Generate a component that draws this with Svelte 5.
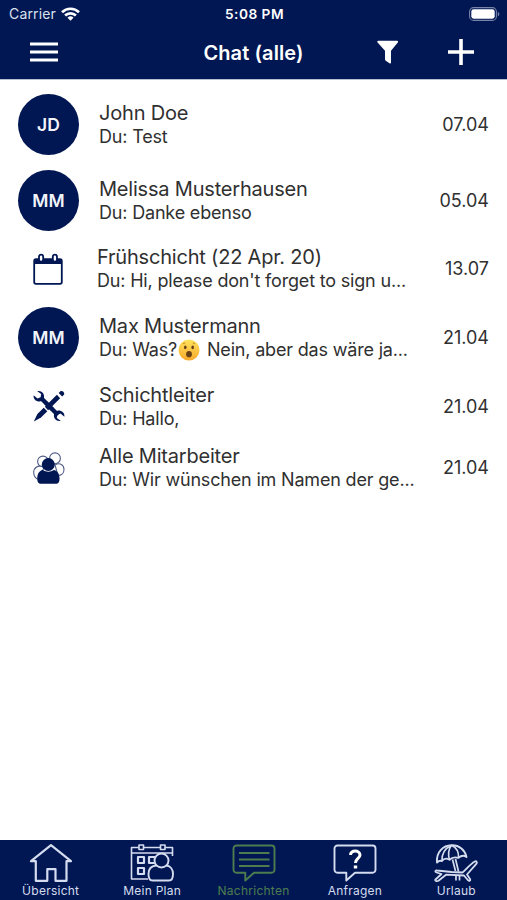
<script lang="ts">
  type Chat = {
    kind: 'person' | 'shift' | 'tools' | 'group';
    initials?: string;
    name: string;
    before: string;
    emoji?: boolean;
    after?: string;
    date: string;
  };

  const chats: Chat[] = [
    { kind: 'person', initials: 'JD', name: 'John Doe', before: 'Du: Test', date: '07.04' },
    { kind: 'person', initials: 'MM', name: 'Melissa Musterhausen', before: 'Du: Danke ebenso', date: '05.04' },
    { kind: 'shift', name: 'Frühschicht (22 Apr. 20)', before: "Du: Hi, please don't forget to sign u...", date: '13.07' },
    { kind: 'person', initials: 'MM', name: 'Max Mustermann', before: 'Du: Was?', emoji: true, after: ' Nein, aber das wäre ja...', date: '21.04' },
    { kind: 'tools', name: 'Schichtleiter', before: 'Du: Hallo,', date: '21.04' },
    { kind: 'group', name: 'Alle Mitarbeiter', before: 'Du: Wir wünschen im Namen der ge...', date: '21.04' },
  ];

  const tabs = [
    { id: 'home', label: 'Übersicht' },
    { id: 'plan', label: 'Mein Plan' },
    { id: 'messages', label: 'Nachrichten' },
    { id: 'requests', label: 'Anfragen' },
    { id: 'vacation', label: 'Urlaub' },
  ];

  let active = $state('messages');
</script>

<div class="app">
  <header>
    <!-- Status bar -->
    <div class="status">
      <div class="carrier">
        <span>Carrier</span>
        <svg width="19" height="14" viewBox="0 0 19 14" aria-hidden="true">
          <g fill="none" stroke="#fff" stroke-width="2.7">
            <path d="M1 5.2a12.2 12.2 0 0 1 17 0" />
            <path d="M4.1 8.5a7.7 7.7 0 0 1 10.8 0" />
          </g>
          <path d="M6.5 10.8a4.3 4.3 0 0 1 6 0l-3 3z" fill="#fff" />
        </svg>
      </div>
      <span class="time">5:08 PM</span>
      <svg class="battery" width="31" height="14" viewBox="0 0 31 14" aria-hidden="true">
        <rect x=".6" y=".6" width="26.8" height="12.8" rx="4" fill="none" stroke="#7783a7" stroke-width="1.1" />
        <rect x="2.3" y="2.3" width="23.4" height="9.4" rx="2.4" fill="#fff" />
        <path d="M28.8 4.7c2 .8 2 3.8 0 4.6z" fill="#7783a7" />
      </svg>
    </div>

    <!-- Title bar -->
    <div class="toolbar">
      <button class="menu" aria-label="Menü">
        <svg width="28" height="20" viewBox="0 0 28 20"><path d="M0 2h28M0 10h28M0 18h28" stroke="#fff" stroke-width="3" /></svg>
      </button>
      <h1>Chat (alle)</h1>
      <div class="actions">
        <button aria-label="Filter">
          <svg width="22" height="24" viewBox="0 0 22 24"><path d="M1.3.8h18.8c1 0 1.3 1 .7 1.8L14 10.8v12c0 .8-.8 1-1.5.5l-3.8-2.6c-.5-.4-.7-.8-.7-1.4v-8.5L.6 2.6C0 1.8.3.8 1.3.8z" fill="#fff" /></svg>
        </button>
        <button aria-label="Neuer Chat">
          <svg width="26" height="26" viewBox="0 0 26 26"><path d="M0 13h26M13 0v26" stroke="#fff" stroke-width="3.6" /></svg>
        </button>
      </div>
    </div>
  </header>

  <!-- Chat list -->
  <main>
    {#each chats as chat}
      <div class="row" class:row--person={chat.kind === 'person'} class:row--shift={chat.kind === 'shift'}>
        <div class="avatar">
          {#if chat.kind === 'person'}
            <span class="circle">{chat.initials}</span>
          {:else if chat.kind === 'shift'}
            <svg width="30" height="32" viewBox="0 0 30 32">
              <rect x="1.2" y="6.2" width="27.6" height="24.6" rx="1.8" fill="#fff" stroke="#001753" stroke-width="1.8" />
              <path d="M1 6.5h28v4.500H1z" fill="#001753" />
              <rect x="6" y="1.6" width="4.2" height="7" rx="2.1" fill="#fff" stroke="#001753" stroke-width="1.8" />
              <rect x="19.8" y="1.6" width="4.2" height="7" rx="2.1" fill="#fff" stroke="#001753" stroke-width="1.8" />
            </svg>
          {:else if chat.kind === 'tools'}
            <svg width="32" height="32" viewBox="0 0 32 32">
              <path d="M8 8l17 17" stroke="#001753" stroke-width="4.4" />
              <path d="M4.3 1.2C8.2.2 12 3.6 10.9 8c-.7 2.7-3.7 4.2-6.4 3.3C1.8 10.4.2 8 .6 5.2l3.900 3.200 3.100-1.200.6-3.200zM27.700 30.800c-3.900 1-7.700-2.400-6.600-6.800.7-2.700 3.700-4.200 6.400-3.300 2.700.9 4.300 3.300 3.900 6.100l-3.900-3.200-3.100 1.200-.6 3.200z" fill="#001753" />
              <path d="M9 23L26 6" stroke="#fff" stroke-width="5.8" />
              <path d="M13.500 18.500L25.500 6.500" stroke="#001753" stroke-width="4.6" />
              <path d="M10.700 17.700l3.600 3.600-6.300 6.300L.8 31.400l3.600-7.400z" fill="#001753" />
              <path d="M13 13l6 6" stroke="#001753" stroke-width="4.4" />
              <path d="M25.700 3l1.700-1.700c1.800-1.400 4.900 1.500 3.500 3.500L29.200 6.500z" fill="#001753" />
            </svg>
          {:else}
            <svg width="32" height="32" viewBox="0 0 32 32">
              <g fill="#fff" stroke="#4f5c86" stroke-width="1.1">
                <circle cx="22" cy="6.300" r="5.400" />
                <path d="M22 13c5-3 9 0 9 4.500 0 3.500-2.500 6-6 6z" />
                <circle cx="10" cy="9.500" r="5.400" />
                <path d="M11 15.500C5 12 .7 16 .7 20.500c0 3.500 2 6 5 7z" />
              </g>
              <circle cx="15.300" cy="12.500" r="6.500" fill="#001753" />
              <path d="M9.800 18c3.300 2.200 7.700 2.200 11 0 3.500.6 5.700 3.600 5.700 8.500 0 3.700-1 5.300-3.700 5.300H8.200c-2.800 0-3.900-1.600-3.900-5.300 0-4.900 2-7.900 5.500-8.500z" fill="#001753" />
            </svg>
          {/if}
        </div>
        <div class="text">
          <div class="name">{chat.name}</div>
          <div class="preview">{chat.before}{#if chat.emoji}<svg class="emoji" viewBox="0 0 22 22" role="img" aria-label="Erstauntes Gesicht">
            <defs><linearGradient id="face" x2="0" y2="1"><stop stop-color="#ffe35c" /><stop offset="1" stop-color="#f7a92b" /></linearGradient></defs>
            <circle cx="11" cy="11" r="10.5" fill="url(#face)" />
            <ellipse cx="7.3" cy="8.3" rx="1.3" ry="1.9" fill="#684016" />
            <ellipse cx="14.7" cy="8.3" rx="1.3" ry="1.9" fill="#684016" />
            <ellipse cx="11" cy="15.2" rx="2.9" ry="3.1" fill="#684016" />
            <path d="M5 4.800l2.200-1M14.800 3.800l2.200 1" stroke="#b8741b" stroke-width=".8" />
          </svg>{/if}{chat.after ?? ''}</div>
        </div>
        <time>{chat.date}</time>
      </div>
    {/each}
  </main>

  <!-- Bottom navigation -->
  <nav>
    {#each tabs as tab}
      <button class="tab" class:tab--active={tab.id === active} onclick={() => (active = tab.id)}>
        <svg width="44" height="38" viewBox="0 0 44 38" fill="none" stroke="currentColor" stroke-width="1.9" stroke-linejoin="round">
          {#if tab.id === 'home'}
            <path d="M22 1.200L2 17.200h4.800v19.600h11.500V25.200h8.200v11.600h11V17.200H42z" stroke-width="2.2" />
          {:else if tab.id === 'plan'}
            <path d="M18 35H1.500V3.500h41V12M1.500 9h41" stroke-width="1.6" />
            <path d="M9 1h4.500v4.500H9zM30.500 1H35v4.500h-4.500z" fill="#001753" stroke-width="1.6" />
            <path d="M8 13h6v6H8zM8 24h6v6H8zM25 13h-6v6h5.500" stroke-width="2.2" />
            <path d="M26 21.500c-5 .5-7.500 4-7.500 8.500 0 4 1.500 6.500 4 6.500h16.500c2.500 0 4-2.500 4-6.500 0-4.500-2.500-8-6.500-8.500z" fill="#001753" stroke-width="1.9" />
            <circle cx="31.500" cy="16.500" r="7" fill="#001753" stroke-width="1.9" />
          {:else if tab.id === 'messages'}
            <path d="M4.500 1.500h35a3 3 0 0 1 3 3v21.200a3 3 0 0 1-3 3H22l-8.700 7.800v-7.800H4.500a3 3 0 0 1-3-3V4.500a3 3 0 0 1 3-3zM7 9h30.500M7 15.500h30.500M7 22h30.500" />
          {:else if tab.id === 'requests'}
            <path d="M4.500 1.500h35a3 3 0 0 1 3 3v21.200a3 3 0 0 1-3 3H22l-8.700 7.800v-7.800H4.500a3 3 0 0 1-3-3V4.500a3 3 0 0 1 3-3z" />
            <path d="M17.500 11c0-5.500 9.500-5 9.500 0 0 3.500-4.500 3.500-4.500 8" stroke="#fff" stroke-width="3" stroke-linejoin="miter" />
            <path d="M20.800 21.500h3.400v3h-3.400z" fill="#fff" stroke="none" />
          {:else}
            <path d="M3 18.500C2 8 9 1.500 17.500 1.300 25.500 1 31 6 32.500 13c-2-1.500-5-1.800-8 .8-3-.8-7-.2-9 2-3-1.800-6-1-7.500 1.200-1.800-.7-3.500 0-5 1.500z" stroke-width="1.9" />
            <path d="M17.500 1.300C10 5 7.500 10 8 17M17.500 1.300C14 6 14 11 15.500 15.800M17.500 1.300C23 4 25 8 24.500 13.800" stroke-width="1.6" />
            <path d="M18.500 15.500l3 11.500M21.500 15l3 12.500M22 31.500v5M25.500 31v5.500" stroke-width="1.7" />
            <path d="M1.500 35.500l6-5.500-5-1.500c-2-.7-1-2.300.6-2l14.500 1.500 10.900.5c2.500-1.500 7.500-8.500 12.300-11 1.700-.8 2.700 1 1.500 2.300L33 30.500l3 4.500c1 1.800-1 2.500-2.200 1L30 31.500l-18-.8-7.500 6c-1.900 1-4-.2-3-1.200z" fill="#001753" stroke-width="1.8" />
          {/if}
        </svg>
        <span>{tab.label}</span>
      </button>
    {/each}
  </nav>
</div>

<style>
  :global(body) {
    margin: 0;
    background: #fff;
  }

  .app {
    display: flex;
    flex-direction: column;
    width: 507px;
    height: 900px;
    overflow: hidden;
    background: #fff;
    color: #303030;
    font-family: Inter, 'Noto Sans', sans-serif;
  }

  button {
    display: flex;
    padding: 0;
    border: 0;
    background: none;
    color: inherit;
    font: inherit;
    cursor: pointer;
  }

  svg {
    display: block;
    flex: none;
  }

  /* Header */
  header {
    height: 79px;
    box-sizing: content-box;
    border-bottom: 1px solid #b5bdd3;
    background: #001753;
    color: #fff;
  }

  .status {
    display: grid;
    grid-template-columns: 1fr auto 1fr;
    align-items: center;
    height: 27px;
    padding: 0 7px 0 9px;
  }

  .carrier {
    display: flex;
    align-items: center;
    gap: 5px;
    color: #dce1ef;
    font-size: 14px;
    letter-spacing: 0.15px;
  }

  .time {
    font-size: 13.7px;
    font-weight: 600;
    letter-spacing: 0.5px;
  }

  .battery {
    justify-self: end;
  }

  .toolbar {
    display: grid;
    grid-template-columns: 1fr auto 1fr;
    align-items: center;
    height: 50px;
    padding: 0 33px 0 30px;
  }

  .menu {
    justify-self: start;
  }

  h1 {
    margin: 0;
    padding: 1px 0 0 3px;
    font-size: 20px;
    font-weight: 600;
    line-height: 26px;
    letter-spacing: 0.1px;
  }

  .actions {
    display: flex;
    align-items: center;
    justify-content: flex-end;
    gap: 49px;
  }

  /* Chat list */
  main {
    flex: 1;
    padding-top: 6px;
  }

  .row {
    display: flex;
    align-items: center;
    height: 61.5px;
    padding: 0 18px;
  }

  .row--person {
    height: 76px;
  }

  .avatar {
    display: flex;
    justify-content: center;
    width: 61px;
    margin-right: 20px;
  }

  .row--shift .avatar {
    width: 59px;
  }

  .circle {
    display: flex;
    align-items: center;
    justify-content: center;
    width: 61px;
    height: 61px;
    border-radius: 50%;
    background: #001753;
    color: #f2f4fa;
    font-size: 17.5px;
    font-weight: 600;
  }

  .text {
    flex: 1;
    white-space: nowrap;
  }

  .name {
    font-size: 20px;
    line-height: 24px;
    letter-spacing: -0.2px;
  }

  .preview {
    font-size: 18px;
    line-height: 23px;
    letter-spacing: -0.18px;
    white-space: pre;
  }

  .emoji {
    display: inline-block;
    width: 22px;
    height: 22px;
    margin: -3px 2px -3px 1px;
    vertical-align: -4px;
    position: relative;
    top: -2px;
  }

  time {
    font-size: 18px;
  }

  /* Bottom navigation */
  nav {
    display: flex;
    height: 60px;
    background: #001753;
    color: #d5dcef;
  }

  .tab {
    flex: 1;
    flex-direction: column;
    align-items: center;
    padding-top: 4px;
  }

  .tab span {
    margin-top: 1px;
    font-size: 12px;
    line-height: 16px;
    letter-spacing: 0.25px;
  }

  .tab--active {
    color: #4d7d4f;
  }
</style>
